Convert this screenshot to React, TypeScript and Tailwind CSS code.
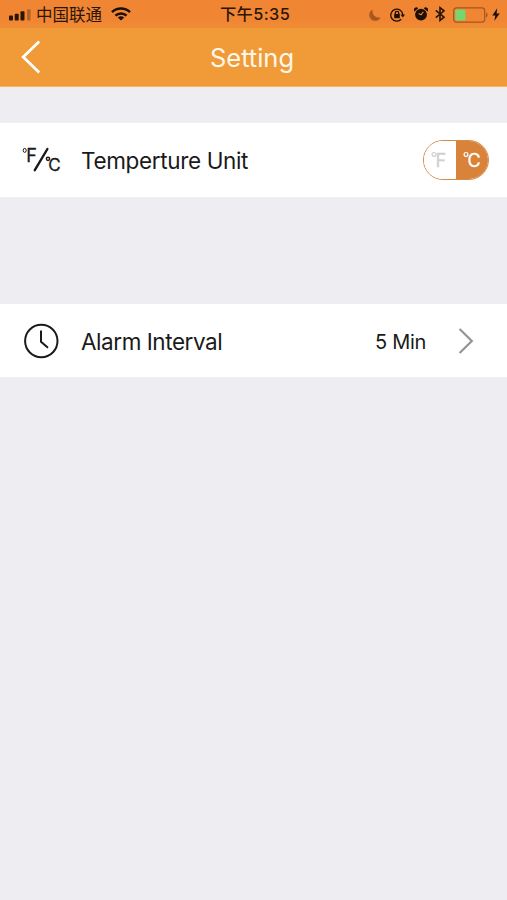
import { useState } from 'react';

type Unit = 'F' | 'C';

function StatusBar() {
  return (
    <div className="flex h-7 items-center bg-gradient-to-b from-[#f08533] from-70% to-[#f08c35] text-[#2b1606]">
      <div className="flex flex-1 items-center pl-[9px]">
        <svg width="23" height="12" viewBox="0 0 23 12" className="mt-[2px]" fill="#2b1606">
          <rect x="0" y="6.5" width="4" height="5" rx="1" />
          <rect x="5.7" y="4.8" width="4" height="6.7" rx="1" />
          <rect x="11.5" y="2.2" width="4" height="9.3" rx="1" />
          <rect x="18" y="0.2" width="3.6" height="11.3" rx="1" opacity="0.3" />
        </svg>
        <span className="ml-[4px] pt-[2px] text-[16.5px] leading-[26px] whitespace-nowrap">中国联通</span>
        <svg width="20" height="14" viewBox="0 0 20 14" className="ml-[9px]" fill="none" stroke="#1d0f04" strokeWidth="2.5">
          <path d="M1 5.2a13 13 0 0 1 18 0" />
          <path d="M4.4 8.7a8.2 8.2 0 0 1 11.2 0" />
          <path d="M10 13.6 6.8 10.6a4.8 4.8 0 0 1 6.4 0Z" fill="#1d0f04" stroke="none" />
        </svg>
      </div>
      <span className="pt-px pl-px text-[16.3px] leading-[27px] font-medium tracking-[0.4px] whitespace-nowrap">下午5:35</span>
      <div className="flex flex-1 items-center justify-end pr-[7px]">
        <svg width="12" height="12" viewBox="0 0 12 12" className="mt-[2px] mr-[9px]" fill="#a6591f">
          <path d="M3.6 0.4A6 6 0 1 0 11.7 8.2C7 9.6 2.6 5.6 3.6 0.4Z" />
        </svg>
        <svg width="15" height="14" viewBox="0 0 15 14" className="mt-px mr-[9px]" fill="none" stroke="#1d0f04" strokeWidth="1.3">
          <path d="M11.2 11.3A6 6 0 1 1 12.8 7" />
          <path d="M10.5 6.4h4.5l-2.2 3Z" fill="#1d0f04" stroke="none" />
          <rect x="4.2" y="6" width="5.6" height="4.2" fill="#1d0f04" stroke="none" />
          <path d="M5.3 6.2V5a1.7 1.7 0 0 1 3.4 0v1.2" />
        </svg>
        <svg width="14" height="14" viewBox="0 0 14 14" className="mr-[7px]" fill="#1d0f04">
          <circle cx="7" cy="7.6" r="5.9" />
          <path d="M0.5 4.6A2.3 2.3 0 0 1 4.2 1.2ZM13.5 4.6A2.3 2.3 0 0 0 9.8 1.2Z" />
          <path d="M9.3 4.8 7 7.8 4.6 6.6" fill="none" stroke="#f08533" strokeWidth="1.1" />
        </svg>
        <svg width="10" height="16" viewBox="0 0 10 16" className="mr-[8px]" fill="none" stroke="#2b1606" strokeWidth="1.6">
          <path d="M0.8 4.4 9 11.2 5 14.4V1.6L9 4.8 0.8 11.6" />
        </svg>
        <svg width="35" height="16" viewBox="0 0 35 16" className="mt-px mr-[4px]">
          <rect x="0.7" y="0.9" width="31" height="14.2" rx="2.8" fill="none" stroke="#a4571e" strokeWidth="1.2" />
          <rect x="2.4" y="2.6" width="10" height="10.8" rx="1" fill="#76d672" />
          <path d="M33 5.6a2.6 2.6 0 0 1 0 4.8Z" fill="#a4571e" />
        </svg>
        <svg width="8" height="13" viewBox="0 0 8 13" fill="#1d0f04">
          <path d="M5.2 0.3 0.3 7.4h3L2.4 12.7 7.7 5.4H4.6Z" />
        </svg>
      </div>
    </div>
  );
}

function NavBar({ title }: { title: string }) {
  return (
    <header className="flex h-[59px] items-center border-b border-[#f3b56a] bg-[#f09b37] pr-[23px] pl-5">
      <button className="w-[22px]" aria-label="Back">
        <svg width="22" height="34" viewBox="0 0 22 34" fill="none" stroke="#fff" strokeWidth="2.8">
          <path d="M19.2 1.6 3.2 17 19.2 32.4" />
        </svg>
      </button>
      <h1 className="flex-1 pt-px text-center text-[25.5px] leading-none text-[#fff8ea]">{title}</h1>
      <div className="w-[22px]" />
    </header>
  );
}

function UnitIcon() {
  return (
    <svg width="42" height="32" viewBox="0 0 42 32" fill="none" stroke="#1a1a1a">
      <ellipse cx="3.7" cy="6.4" rx="1.5" ry="2" strokeWidth="1" />
      <text x="5.2" y="18" fontSize="18" fill="#1a1a1a" strokeWidth="0.3">F</text>
      <path d="M26.4 5 13.8 26.2" strokeWidth="2.4" strokeLinecap="round" />
      <circle cx="27" cy="14.8" r="1.6" strokeWidth="1.5" />
      <text x="27.2" y="26.8" fontSize="17" fill="#1a1a1a" strokeWidth="0.3">C</text>
    </svg>
  );
}

function ClockIcon() {
  return (
    <svg width="36" height="36" viewBox="0 0 36 36" fill="none" stroke="#1a1a1a" strokeWidth="2">
      <circle cx="18.3" cy="18" r="16.2" />
      <path d="M18 7.5v11.2l7 6" />
    </svg>
  );
}

function UnitToggle({ unit, onChange }: { unit: Unit; onChange: (unit: Unit) => void }) {
  const units: Unit[] = ['F', 'C'];

  return (
    <div className="flex h-10 w-[66px] overflow-hidden rounded-full border border-[#d98a45] bg-white">
      {units.map((u) => (
        <button
          key={u}
          onClick={() => onChange(u)}
          className={`flex flex-1 items-center justify-center ${
            unit === u ? 'bg-[#d9833a] text-white' : 'bg-white text-[#cfcfd4]'
          }`}
        >
          <svg width="28" height="28" viewBox="0 0 28 28" fill="none" stroke="currentColor">
            <circle cx="8" cy="8.4" r="1.9" strokeWidth="1.2" />
            <text x="9.4" y="21.2" fontSize="18" fill="currentColor" strokeWidth="0.3">{u}</text>
          </svg>
        </button>
      ))}
    </div>
  );
}

export default function App() {
  const [unit, setUnit] = useState<Unit>('C');

  return (
    <div className="min-h-screen bg-[#eeedf2] font-['Inter','Noto_Sans_CJK_SC',sans-serif] text-[#1a1a1a]">
      <StatusBar />
      <NavBar title="Setting" />

      <main className="pt-9">
        <div className="flex h-[74px] items-center bg-white pr-[18px] pl-[21px]">
          <div className="w-[60px]">
            <UnitIcon />
          </div>
          <span className="flex-1 pt-[2px] text-[22.5px] tracking-[-0.35px]">Temperture Unit</span>
          <UnitToggle unit={unit} onChange={setUnit} />
        </div>

        <button className="mt-[107px] flex h-[73px] w-full items-center bg-white pr-[32px] pl-[23px] text-left">
          <span className="w-[58px]">
            <ClockIcon />
          </span>
          <span className="flex-1 pt-[2px] text-[22.5px] tracking-[-0.45px]">Alarm Interval</span>
          <span className="mr-[32px] pt-[3px] text-[20px] tracking-[-0.3px]">5 Min</span>
          <svg width="17" height="28" viewBox="0 0 17 28" fill="none" stroke="#949494" strokeWidth="2.2">
            <path d="M1.6 2 13.8 14 1.6 26" />
          </svg>
        </button>
      </main>
    </div>
  );
}
